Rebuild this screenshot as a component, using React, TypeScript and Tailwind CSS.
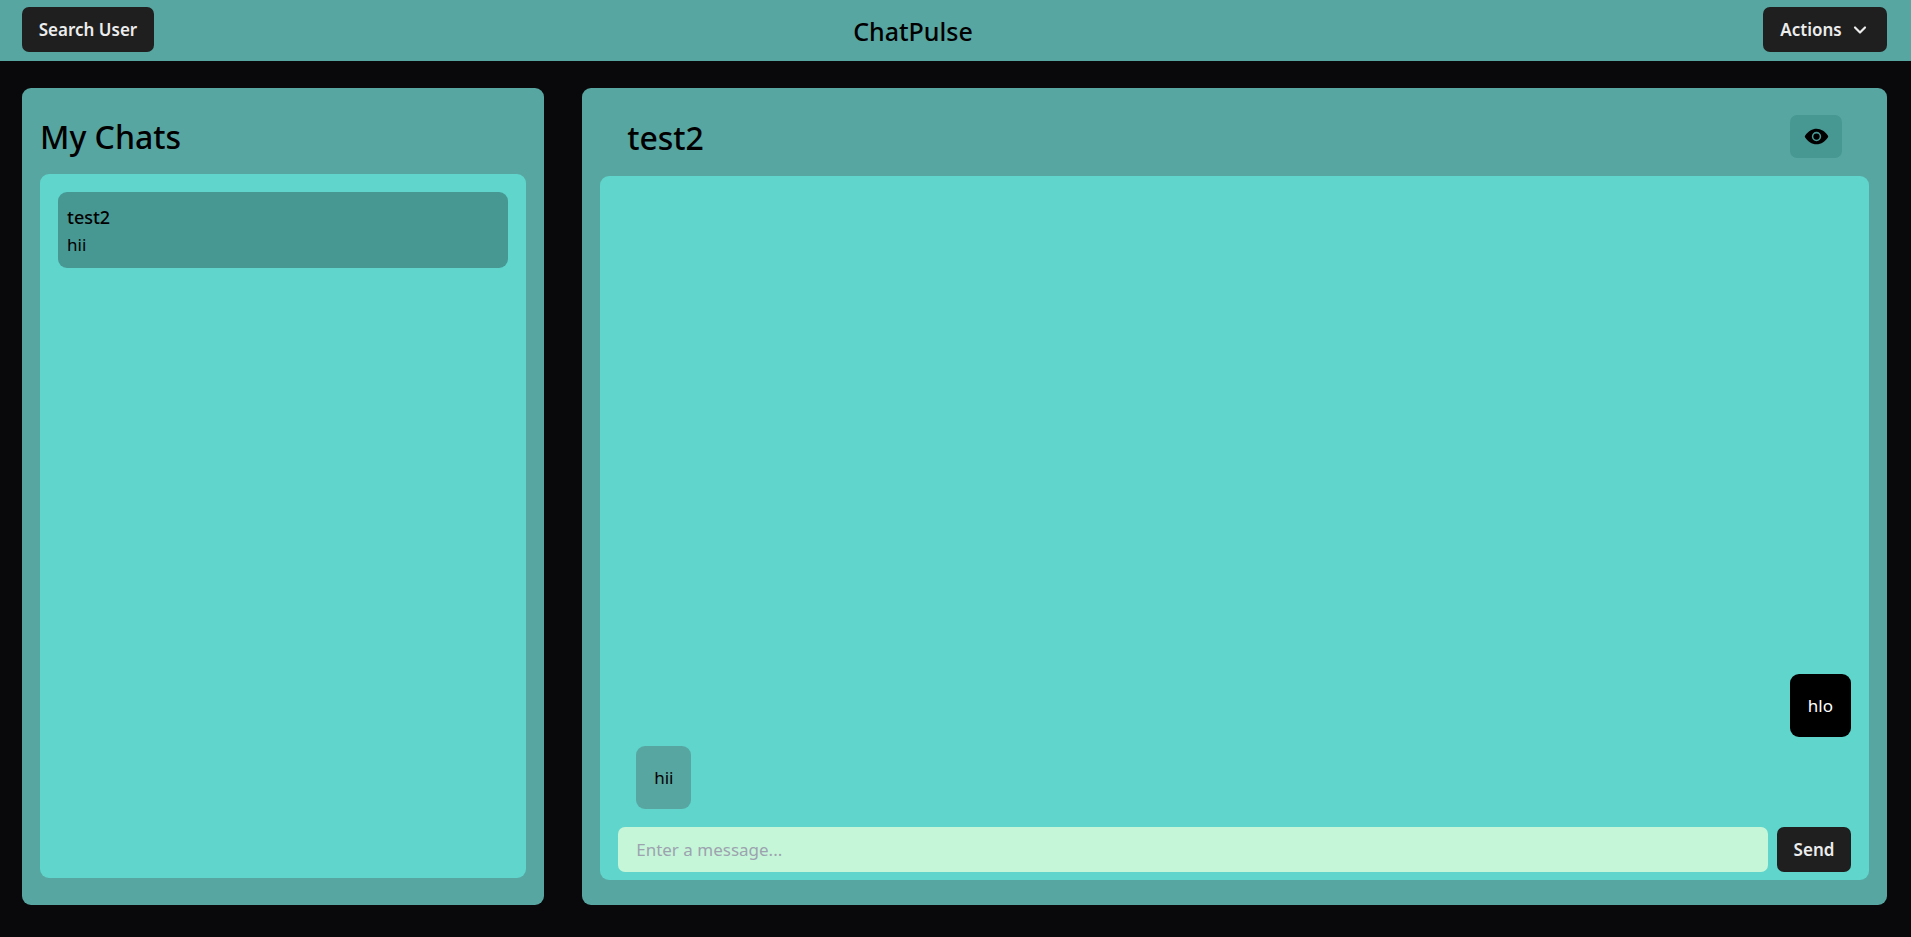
import { useState } from "react";
import { ChevronDown } from "lucide-react";
import { IoEye } from "react-icons/io5";

const chats = [{ name: "test2", latest: "hii" }];

const messages = [
  { id: 1, text: "hlo", own: true },
  { id: 2, text: "hii", own: false },
];

const darkButton =
  "flex h-[45px] shrink-0 items-center justify-center rounded-[7px] bg-[#1f1f1f] text-[17px] font-semibold text-[#ececec]";

function Header() {
  return (
    <header className="flex h-[61px] items-start justify-between bg-[#58a6a1] pt-[7px] pr-6 pl-[22px]">
      <button className={`${darkButton} w-[132px]`}>Search User</button>
      <h1 className="pt-[6px] text-[25px] leading-9 font-medium">ChatPulse</h1>
      <div className="flex w-[215px] justify-end">
        <button className={`${darkButton} w-[124px] gap-2`}>
          Actions
          <ChevronDown size={20} strokeWidth={2.6} />
        </button>
      </div>
    </header>
  );
}

function ChatList() {
  return (
    <aside className="flex w-[28%] flex-col rounded-[9px] bg-[#58a6a1] px-[18px] pt-7 pb-[27px]">
      <h2 className="mb-4 text-[32px] leading-[42px] font-medium">My Chats</h2>
      <ul className="flex-1 rounded-[9px] bg-[#5fd5cc] p-[18px]">
        {chats.map((chat) => (
          <li key={chat.name}>
            <button className="block w-full rounded-[9px] bg-[#479893] px-[9px] pt-3 pb-[10px] text-left leading-[27px]">
              <span className="block text-[18px] font-medium">{chat.name}</span>
              <span className="block text-[17px]">{chat.latest}</span>
            </button>
          </li>
        ))}
      </ul>
    </aside>
  );
}

function Conversation() {
  const [draft, setDraft] = useState("");
  return (
    <section className="flex flex-1 flex-col rounded-[9px] bg-[#58a6a1] px-[18px] pt-[27px] pb-[25px]">
      <div className="mb-4 flex items-start justify-between px-[27px]">
        <h2 className="text-[32px] leading-[45px] font-medium">test2</h2>
        <button aria-label="View profile" className="flex h-[43px] w-[52px] items-center justify-center rounded-[7px] bg-[#479893]">
          <IoEye size={25} />
        </button>
      </div>
      <div className="flex flex-1 flex-col rounded-[9px] bg-[#5fd5cc] px-[18px] pb-2">
        <ul className="flex flex-1 flex-col justify-end gap-[9px] pb-[18px] pl-[18px] text-[17px] leading-[27px]">
          {messages.map((message) => (
            <li
              key={message.id}
              className={
                message.own
                  ? "self-end rounded-[9px] bg-black p-[18px] text-white"
                  : "self-start rounded-[9px] bg-[#58a6a1] p-[18px]"
              }
            >
              {message.text}
            </li>
          ))}
        </ul>
        <form className="flex gap-[9px]" onSubmit={(event) => event.preventDefault()}>
          <input
            aria-label="Message"
            placeholder="Enter a message..."
            value={draft}
            onChange={(event) => setDraft(event.target.value)}
            className="h-[45px] min-w-0 flex-1 rounded-[7px] bg-[#c6f6d8] px-[18px] text-[17px] outline-none placeholder:text-[#9ca3af]"
          />
          <button type="submit" className={`${darkButton} w-[74px]`}>
            Send
          </button>
        </form>
      </div>
    </section>
  );
}

export default function App() {
  return (
    <div className="flex min-h-screen flex-col bg-[#09090b] font-['Noto_Sans','Open_Sans',sans-serif] text-black">
      <Header />
      <main className="flex flex-1 gap-[38px] pt-[27px] pr-6 pb-8 pl-[22px]">
        <ChatList />
        <Conversation />
      </main>
    </div>
  );
}
